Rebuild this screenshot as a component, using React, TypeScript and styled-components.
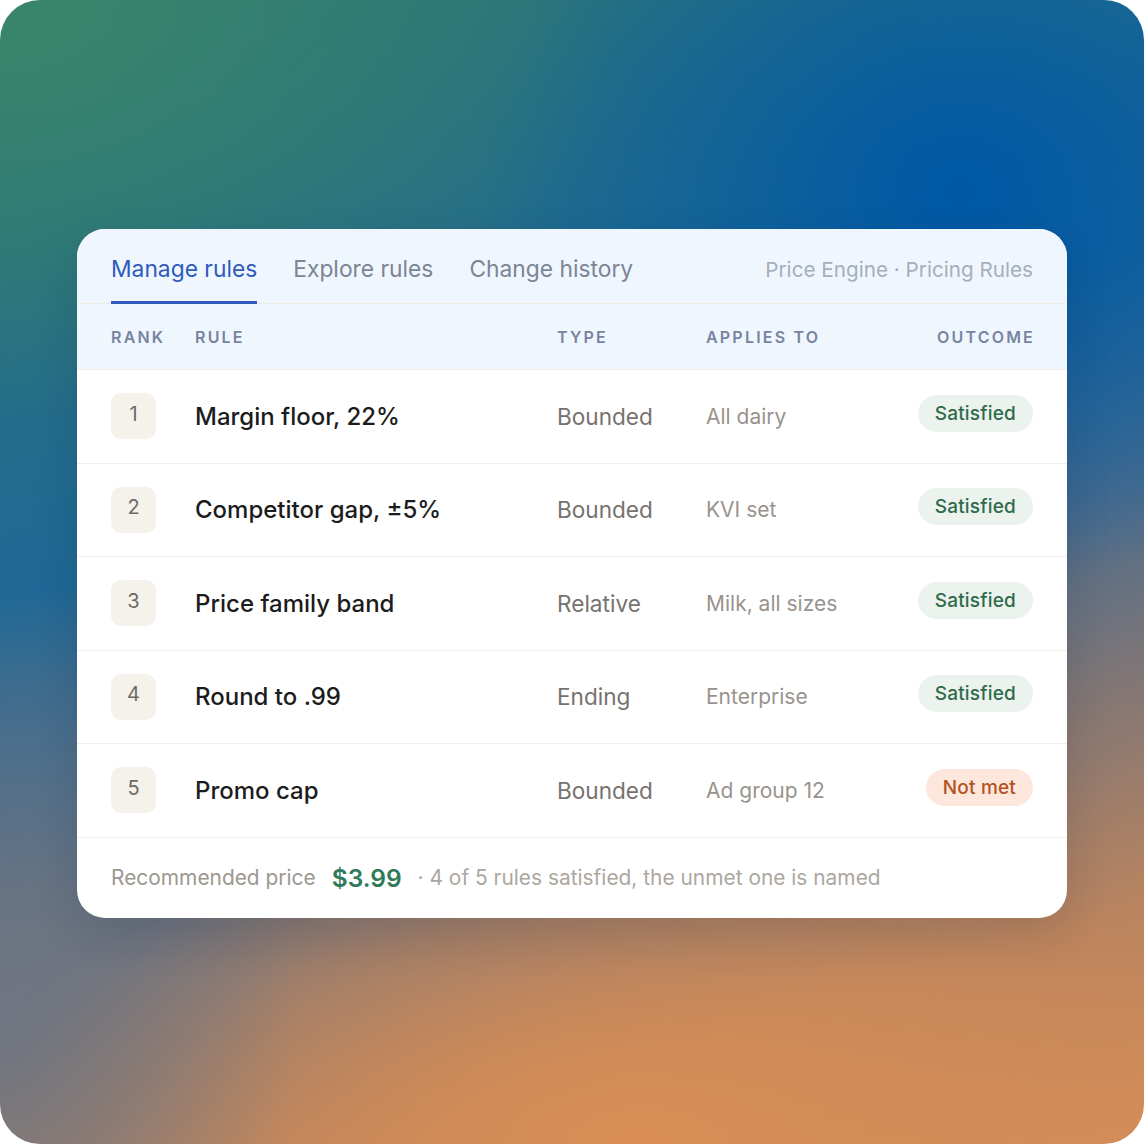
import styled, { createGlobalStyle } from 'styled-components'

const Global = createGlobalStyle`
  html, body {
    margin: 0;
    padding: 0;
    background: #ffffff;
  }
  * {
    box-sizing: border-box;
  }
`

const Frame = styled.div`
  width: 1144px;
  height: 1144px;
  border-radius: 40px;
  overflow: hidden;
  display: flex;
  align-items: flex-start;
  justify-content: center;
  padding-top: 229px;
  font-family: Inter, 'Noto Sans', sans-serif;
  background:
    radial-gradient(ellipse 620px 420px at 0px 0px, rgba(58, 134, 106, 1), rgba(58, 134, 106, 0) 100%),
    radial-gradient(ellipse 480px 400px at 960px 190px, rgba(0, 88, 165, 1), rgba(0, 88, 165, 0) 100%),
    radial-gradient(ellipse 300px 420px at 0px 1000px, rgba(110, 118, 130, 0.9), rgba(110, 118, 130, 0) 100%),
    radial-gradient(ellipse 640px 340px at 640px 1144px, rgba(218, 142, 84, 1), rgba(218, 142, 84, 0) 100%),
    linear-gradient(162deg, #2d7872 0%, #1f6896 40%, #4a6c8c 56%, #857774 70%, #b9845f 84%, #d38c58 100%);
`

const Card = styled.div`
  width: 990px;
  background: #ffffff;
  border-radius: 28px;
  overflow: hidden;
  box-shadow: 0 18px 44px rgba(20, 30, 50, 0.14);
`

const Head = styled.div`
  background: #eff6fe;
`

const TabBar = styled.div`
  height: 75px;
  padding: 0 34px;
  display: flex;
  align-items: stretch;
  border-bottom: 1px solid #f3ece6;
`

const Tabs = styled.div`
  display: flex;
  gap: 36px;
  flex: 1;
`

const Tab = styled.div<{ $active?: boolean }>`
  display: flex;
  align-items: center;
  padding-top: 6px;
  font-size: 22.8px;
  color: ${({ $active }) => ($active ? '#2e5bbd' : '#7c8594')};
  border-bottom: 3px solid ${({ $active }) => ($active ? '#2f5bbf' : 'transparent')};
  margin-bottom: -1px;
`

const Crumb = styled.div`
  align-self: center;
  padding-top: 6px;
  font-size: 20.7px;
  color: #a6aeb9;
`

const Cols = styled.div`
  display: grid;
  grid-template-columns: 84px 362px 149px 1fr auto;
  align-items: center;
  height: 66px;
  padding: 0 34px;
  border-bottom: 1px solid #f3ece6;
`

const ColLabel = styled.div<{ $right?: boolean }>`
  font-size: 16px;
  font-weight: 600;
  letter-spacing: 2.2px;
  color: #7884a0;
  text-align: ${({ $right }) => ($right ? 'right' : 'left')};
  margin-right: ${({ $right }) => ($right ? '-2px' : '0')};
`

const Row = styled.div`
  display: grid;
  grid-template-columns: 84px 362px 149px 1fr auto;
  align-items: center;
  height: 93.5px;
  padding: 0 34px;
  border-bottom: 1px solid #f4ede8;
`

const Rank = styled.div`
  width: 45px;
  height: 46px;
  border-radius: 10px;
  background: #f5f1eb;
  display: flex;
  align-items: center;
  justify-content: center;
  padding-bottom: 5px;
  font-size: 20px;
  color: #6d6a66;
`

const RuleName = styled.div`
  font-size: 24px;
  font-weight: 500;
  color: #1c1c1c;
`

const TypeText = styled.div`
  font-size: 22.6px;
  color: #77726d;
`

const AppliesText = styled.div`
  font-size: 21px;
  color: #99938d;
`

const Pill = styled.div<{ $bad?: boolean }>`
  justify-self: end;
  height: 37px;
  padding: 0 17px;
  margin-bottom: 6px;
  border-radius: 19px;
  display: flex;
  align-items: center;
  font-size: 19px;
  font-weight: 500;
  letter-spacing: 0.2px;
  background: ${({ $bad }) => ($bad ? '#fde6dc' : '#ecf2ee')};
  color: ${({ $bad }) => ($bad ? '#b3521f' : '#2e6b4b')};
`

const Footer = styled.div`
  height: 80px;
  padding: 0 34px;
  display: flex;
  align-items: center;
  gap: 16px;
  font-size: 20.9px;
  color: #9c978f;
`

const Price = styled.span`
  font-size: 24.5px;
  font-weight: 600;
  color: #2f7a5a;
`

const Note = styled.span`
  color: #aca79f;
`

const rules = [
  { rank: 1, name: 'Margin floor, 22%', type: 'Bounded', applies: 'All dairy', met: true },
  { rank: 2, name: 'Competitor gap, ±5%', type: 'Bounded', applies: 'KVI set', met: true },
  { rank: 3, name: 'Price family band', type: 'Relative', applies: 'Milk, all sizes', met: true },
  { rank: 4, name: 'Round to .99', type: 'Ending', applies: 'Enterprise', met: true },
  { rank: 5, name: 'Promo cap', type: 'Bounded', applies: 'Ad group 12', met: false },
]

export default function App() {
  return (
    <>
      <Global />
      <Frame>
        <Card>
          <Head>
            <TabBar>
              <Tabs>
                <Tab $active>Manage rules</Tab>
                <Tab>Explore rules</Tab>
                <Tab>Change history</Tab>
              </Tabs>
              <Crumb>Price Engine · Pricing Rules</Crumb>
            </TabBar>
            <Cols>
              <ColLabel>RANK</ColLabel>
              <ColLabel>RULE</ColLabel>
              <ColLabel>TYPE</ColLabel>
              <ColLabel>APPLIES TO</ColLabel>
              <ColLabel $right>OUTCOME</ColLabel>
            </Cols>
          </Head>
          {rules.map((r) => (
            <Row key={r.rank}>
              <Rank>{r.rank}</Rank>
              <RuleName>{r.name}</RuleName>
              <TypeText>{r.type}</TypeText>
              <AppliesText>{r.applies}</AppliesText>
              <Pill $bad={!r.met}>{r.met ? 'Satisfied' : 'Not met'}</Pill>
            </Row>
          ))}
          <Footer>
            <span>Recommended price</span>
            <Price>$3.99</Price>
            <Note>· 4 of 5 rules satisfied, the unmet one is named</Note>
          </Footer>
        </Card>
      </Frame>
    </>
  )
}
